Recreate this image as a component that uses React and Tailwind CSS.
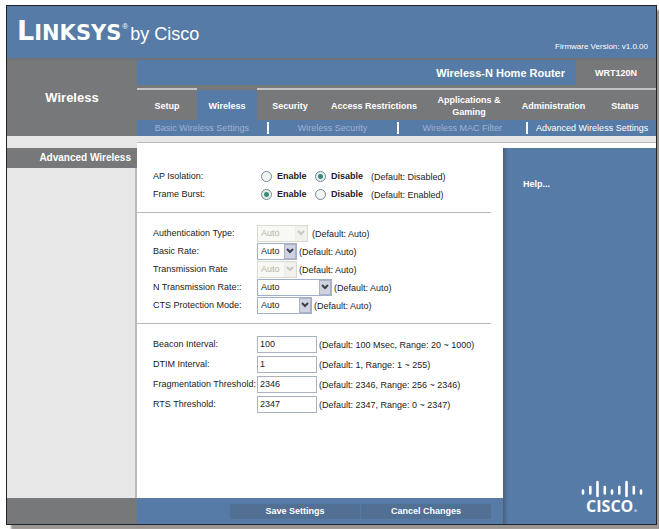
import React, { useState } from 'react';

const tabs = [
  { name: 'Setup' },
  { name: 'Wireless', active: true },
  { name: 'Security' },
  { name: 'Access Restrictions' },
  { name: 'Applications & Gaming' },
  { name: 'Administration' },
  { name: 'Status' },
];

const subTabs = [
  'Basic Wireless Settings',
  'Wireless Security',
  'Wireless MAC Filter',
  'Advanced Wireless Settings',
];

const radioRows = [
  { id: 'ap-isolation', label: 'AP Isolation:', value: 'Disable', hint: '(Default: Disabled)' },
  { id: 'frame-burst', label: 'Frame Burst:', value: 'Enable', hint: '(Default: Enabled)' },
];

const selectRows = [
  { id: 'auth-type', label: 'Authentication Type:', width: 'w-[51px]', disabled: true },
  { id: 'basic-rate', label: 'Basic Rate:', width: 'w-10' },
  { id: 'tx-rate', label: 'Transmission Rate', width: 'w-10', disabled: true },
  { id: 'n-tx-rate', label: 'N Transmission Rate::', width: 'w-[75px]' },
  { id: 'cts-mode', label: 'CTS Protection Mode:', width: 'w-[55px]' },
];

const inputRows = [
  { id: 'beacon', label: 'Beacon Interval:', value: '100', hint: '(Default: 100 Msec, Range: 20 ~ 1000)' },
  { id: 'dtim', label: 'DTIM Interval:', value: '1', hint: '(Default: 1, Range: 1 ~ 255)' },
  { id: 'fragmentation', label: 'Fragmentation Threshold:', value: '2346', hint: '(Default: 2346, Range: 256 ~ 2346)' },
  { id: 'rts', label: 'RTS Threshold:', value: '2347', hint: '(Default: 2347, Range: 0 ~ 2347)' },
];

const RadioRow = ({ row }) => {
  const [value, setValue] = useState(row.value);

  return (
    <div role="radiogroup" aria-labelledby={row.id} className="flex h-[18px] items-center">
      <span id={row.id} className="w-[108px] shrink-0">{row.label}</span>
      {['Enable', 'Disable'].map((option) => (
        <label key={option} className="flex w-[54px] items-center gap-[5px] font-bold">
          <input
            type="radio"
            name={row.id}
            checked={value === option}
            onChange={() => setValue(option)}
            className="size-[11px] shrink-0 appearance-none rounded-full border border-[#6f8a9c] bg-[#f4f5f3] checked:bg-[radial-gradient(circle,#3d8a78_0_2px,#e6efec_3px)]"
          />
          {option}
        </label>
      ))}
      <span className="pt-[2px] pl-[2px]">{row.hint}</span>
    </div>
  );
};

const SelectRow = ({ row }) => (
  <div className="flex h-[18px] items-center">
    <label htmlFor={row.id} className="w-[104px] shrink-0">{row.label}</label>
    <div className={`relative h-[17px] shrink-0 ${row.width}`}>
      <select
        id={row.id}
        disabled={row.disabled}
        className="block h-[17px] w-full appearance-none border border-[#9fb0c8] bg-white pl-[3px] leading-[15px] disabled:border-[#dcdbd2] disabled:bg-[#f8f8f5] disabled:text-[#b5b4ab] disabled:opacity-100"
      >
        <option>Auto</option>
      </select>
      <span
        className={`pointer-events-none absolute inset-y-px right-px flex w-3 items-center justify-center border ${
          row.disabled ? 'border-[#eeede8] bg-[#f2f1ec] text-[#c9c8bf]' : 'border-[#aeb2c4] bg-[#cfd2df] text-[#3c404e]'
        }`}
      >
        <svg viewBox="0 0 8 6" className="h-[6px] w-2" fill="none" stroke="currentColor" strokeWidth="2">
          <path d="M1 1l3 3 3-3" />
        </svg>
      </span>
    </div>
    <span className={`pt-[2px] ${row.id === 'auth-type' ? 'pl-1' : 'pl-[2px]'}`}>(Default: Auto)</span>
  </div>
);

const InputRow = ({ row }) => (
  <div className="flex h-5 items-center">
    <label htmlFor={row.id} className="w-[104px] shrink-0">{row.label}</label>
    <input
      id={row.id}
      type="text"
      defaultValue={row.value}
      className="h-[17px] w-[60px] shrink-0 border border-[#a9b2be] bg-white px-[2px]"
    />
    <span className="pt-[2px] pl-[2px]">{row.hint}</span>
  </div>
);

const CiscoLogo = () => (
  <div className="flex flex-col items-center text-white">
    <svg viewBox="0 0 62 18" className="h-[18px] w-[62px]" stroke="currentColor" strokeWidth="2.6" strokeLinecap="round">
      <path d="M2 10.5v3M9.3 7v6.5M16.5 2v14M23.8 7v6.5M31 10.5v3M38.3 7v6.5M45.5 2v14M52.8 7v6.5M60 10.5v3" />
    </svg>
    <span className="font-['Open_Sans',sans-serif] text-[16px] leading-4 font-bold">
      CISCO<span className="text-[#a9bed6]">.</span>
    </span>
  </div>
);

const App = () => {
  return (
    <div className="flex min-h-screen bg-white pt-[5px] pr-[2px] pb-1 pl-[6px] font-['Liberation_Sans',Arial,sans-serif] text-[9px] leading-3 text-[#222]">
      <div className="flex flex-1 flex-col border border-[#20242a] bg-[#e7e7e7] shadow-[5px_5px_2px_#9a9492]">
        {/* Brand header */}
        <header className="flex h-[52px] items-end justify-between bg-[#557ba6] pr-2 pl-[10px] text-white">
          <div className="flex items-baseline pb-3">
            <span className="font-['DejaVu_Sans',sans-serif] text-[21px] leading-6 font-bold">
              <span className="text-[27px]">L</span>INKSYS
            </span>
            <sup className="self-start pt-2 pr-[2px] pl-px text-[8px] leading-none">®</sup>
            <span className="text-[18px] leading-6">by Cisco</span>
          </div>
          <span className="pb-[5px] text-[8px]">Firmware Version: v1.0.00</span>
        </header>

        {/* Navigation */}
        <div className="flex border-t-2 border-[#717376] bg-[#777879] text-white">
          <h1 className="flex w-[130px] shrink-0 items-center justify-center text-[13px] font-bold">Wireless</h1>
          <div className="flex-1">
            <div className="flex h-[25px] font-bold">
              <div className="flex flex-1 items-center justify-end bg-[#557ba6] pr-[11px] text-[11px]">
                Wireless-N Home Router
              </div>
              <div className="flex w-20 items-center justify-center">WRT120N</div>
            </div>
            <nav className="mt-[3px] grid grid-cols-[60fr_60fr_66fr_102fr_88fr_81fr_62fr] font-bold">
              {tabs.map((tab) => (
                <a
                  key={tab.name}
                  href="#"
                  className={`flex h-8 items-center justify-center border-t-2 px-1 pt-[2px] text-center ${
                    tab.active ? 'border-[#777879] bg-[#557ba6]' : 'border-[#c3c3c8]'
                  }`}
                >
                  {tab.name}
                </a>
              ))}
            </nav>
            <nav className="grid h-4 grid-cols-4 items-center bg-[#557ba6]">
              {subTabs.map((name, index) => (
                <a
                  key={name}
                  href="#"
                  className={`text-center whitespace-nowrap ${index > 0 ? 'border-l-2 border-white' : ''} ${
                    index === 3 ? 'text-white' : 'text-[#a3b2d2]'
                  }`}
                >
                  {name}
                </a>
              ))}
            </nav>
          </div>
        </div>

        {/* Page body */}
        <div className="flex flex-1">
          <aside className="flex w-[130px] shrink-0 flex-col pt-3">
            <h2 className="h-5 bg-[#777879] pr-[6px] text-right text-[10px] leading-5 font-bold text-white">Advanced Wireless</h2>
            <div className="flex-1 border-r-2 border-[#b9b9be]" />
            <div className="h-[26px] bg-[#777879]" />
          </aside>
          <div className="flex flex-1 flex-col pt-[6px]">
            <div className="h-[6px] border-t border-[#b9b9be] bg-white" />
            <div className="flex flex-1">
              <form className="flex flex-1 flex-col bg-white">
                <section className="mr-3 border-b border-[#b9b9be] pt-[19px] pb-[9px] pl-4">
                  {radioRows.map((row) => (
                    <RadioRow key={row.id} row={row} />
                  ))}
                </section>
                <section className="mr-3 border-b border-[#b9b9be] pt-[11px] pb-[9px] pl-4">
                  {selectRows.map((row) => (
                    <SelectRow key={row.id} row={row} />
                  ))}
                </section>
                <section className="mr-3 flex-1 pt-[10px] pl-4">
                  {inputRows.map((row) => (
                    <InputRow key={row.id} row={row} />
                  ))}
                </section>
                <div className="flex h-[26px] items-center justify-end gap-px bg-[#557ba6] pr-3 font-bold text-white">
                  <button type="submit" className="h-[15px] w-[130px] bg-[#526f94]">Save Settings</button>
                  <button type="reset" className="h-[15px] w-[130px] bg-[#526f94]">Cancel Changes</button>
                </div>
              </form>
              <aside className="flex w-[153px] shrink-0 flex-col justify-between bg-[#557ba6] bg-[linear-gradient(to_right,#4b5f7c,#557ba6_5px)] pt-[30px] pr-[13px] pb-[10px] pl-5 text-white">
                <h3 className="font-bold">Help...</h3>
                <div className="self-end">
                  <CiscoLogo />
                </div>
              </aside>
            </div>
          </div>
        </div>
      </div>
    </div>
  );
};

export default App;
